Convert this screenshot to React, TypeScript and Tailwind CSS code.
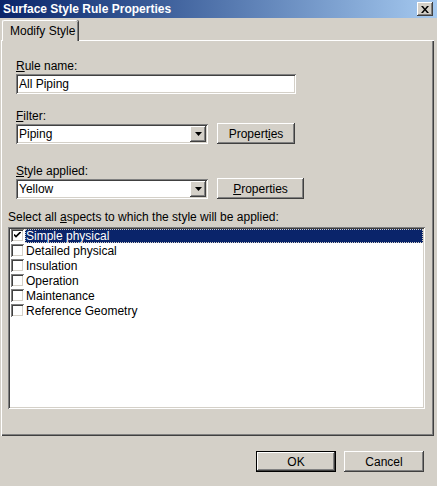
import React from "react";

const raised =
  "shadow-[inset_-1px_-1px_#404040,inset_1px_1px_#ffffff,inset_-2px_-2px_#808080,inset_2px_2px_#d4d0c8]";
const sunken =
  "shadow-[inset_1px_1px_#808080,inset_-1px_-1px_#ffffff,inset_2px_2px_#404040,inset_-2px_-2px_#d4d0c8]";

const aspects = [
  { label: "Simple physical", checked: true },
  { label: "Detailed physical", checked: false },
  { label: "Insulation", checked: false },
  { label: "Operation", checked: false },
  { label: "Maintenance", checked: false },
  { label: "Reference Geometry", checked: false },
];

function Button({
  children,
  className = "",
}: {
  children: React.ReactNode;
  className?: string;
}) {
  return (
    <div
      className={`flex items-center justify-center bg-[#d4d0c8] text-black ${raised} ${className}`}
    >
      {children}
    </div>
  );
}

function Select({ value }: { value: string }) {
  return (
    <div className={`flex items-center w-[192px] h-[20px] bg-white p-[2px] ${sunken}`}>
      <span className="flex-1 pl-[1px] leading-[16px]">{value}</span>
      <div className={`w-[16px] h-[16px] flex items-center justify-center bg-[#d4d0c8] ${raised}`}>
        <svg width="7" height="4" viewBox="0 0 7 4">
          <path d="M0 0h7L3.5 4z" fill="#000" />
        </svg>
      </div>
    </div>
  );
}

function Checkbox({ checked }: { checked: boolean }) {
  return (
    <div className={`w-[13px] h-[13px] bg-white flex items-center justify-center ${sunken}`}>
      {checked && (
        <svg width="7" height="7" viewBox="0 0 7 7">
          <path d="M0 2.5l2 2 5-5" stroke="#000" strokeWidth="1.6" fill="none" />
        </svg>
      )}
    </div>
  );
}

export default function App() {
  return (
    <div className="w-[437px] h-[486px] bg-[#d4d0c8] flex flex-col text-[12px] text-black font-['Liberation_Sans',Arial,sans-serif] overflow-hidden">
      {/* Title bar */}
      <div className="h-[18px] flex items-center justify-between pl-[3px] pr-[4px] bg-gradient-to-r from-[#0a246a] to-[#a6caf0]">
        <span className="text-white font-bold text-[12px] leading-none">
          Surface Style Rule Properties
        </span>
        <Button className="w-[16px] h-[14px]">
          <svg width="8" height="7" viewBox="0 0 8 7">
            <path d="M0 0h2l2 2.5L6 0h2L5 3.5 8 7H6L4 4.5 2 7H0l3-3.5z" fill="#000" />
          </svg>
        </Button>
      </div>

      {/* Tab strip */}
      <div className="flex pl-[2px] pt-[2px]">
        <div className="relative z-10 -mb-px h-[21px] flex items-center whitespace-nowrap pl-[7px] pr-[3px] bg-[#d4d0c8] border-t border-l border-white shadow-[inset_-1px_0_#808080,1px_0_#404040] rounded-t-[2px]">
          Modify Style
        </div>
      </div>

      {/* Tab panel */}
      <div className="ml-[1px] w-[433px] h-[396px] flex flex-col shadow-[inset_1px_1px_#ffffff,inset_-1px_-1px_#404040,inset_-2px_-2px_#808080]">
        <div className="flex flex-col pl-[15px] pt-[19px]">
          <span className="leading-[14px]">
            <u>R</u>ule name:
          </span>
          <div className={`mt-[1px] w-[280px] h-[20px] bg-white flex items-center px-[3px] ${sunken}`}>
            All Piping
          </div>

          <span className="mt-[15px] leading-[14px]">
            <u>F</u>ilter:
          </span>
          <div className="flex items-center gap-[9px]">
            <Select value="Piping" />
            <Button className="w-[78px] h-[21px]">
              Propert<u>i</u>es
            </Button>
          </div>

          <span className="mt-[20px] leading-[14px]">
            <u>S</u>tyle applied:
          </span>
          <div className="flex items-center gap-[9px]">
            <Select value="Yellow" />
            <Button className="w-[87px] h-[21px]">
              <u>P</u>roperties
            </Button>
          </div>
        </div>

        <div className="flex flex-col pl-[7px] mt-[11px]">
          <span className="leading-[14px]">
            Select all <u>a</u>spects to which the style will be applied:
          </span>
          <div className={`mt-[3px] w-[417px] h-[182px] bg-white px-[2px] pt-[1px] ${sunken}`}>
            <div className="flex flex-col">
              {aspects.map((a) => (
                <div key={a.label} className="h-[15px] flex items-center">
                  <div className="w-[15px] pl-[1px] flex items-center">
                    <Checkbox checked={a.checked} />
                  </div>
                  <span
                    className={`flex-1 h-[14px] leading-[14px] pl-[1px] ${
                      a.checked
                        ? "bg-[#0a246a] text-white outline outline-1 outline-dotted outline-[#d4d0c8] -outline-offset-1"
                        : ""
                    }`}
                  >
                    {a.label}
                  </span>
                </div>
              ))}
            </div>
          </div>
        </div>
      </div>

      {/* Footer buttons */}
      <div className="flex justify-end gap-[8px] pr-[13px] mt-[15px]">
        <div className="border border-black">
          <Button className="w-[78px] h-[19px]">OK</Button>
        </div>
        <Button className="w-[80px] h-[21px]">Cancel</Button>
      </div>
    </div>
  );
}
